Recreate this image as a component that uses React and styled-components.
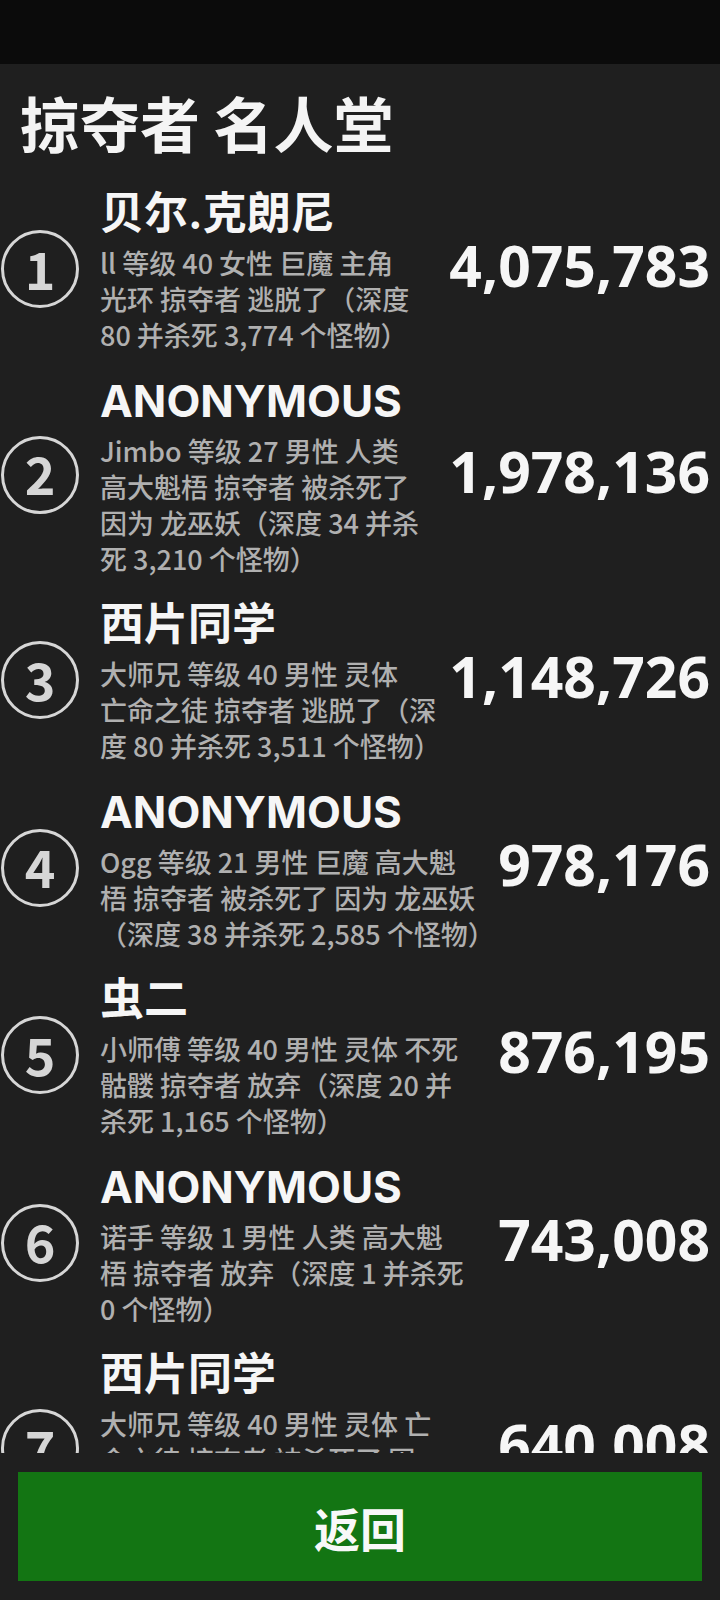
import styled, { createGlobalStyle } from "styled-components";

const GlobalStyle = createGlobalStyle`
  html, body {
    margin: 0;
    padding: 0;
    background: #1f1f1f;
  }
  body {
    font-family: "Noto Sans CJK SC", "Noto Sans", sans-serif;
  }
`;

const Page = styled.div`
  height: 100vh;
  display: flex;
  flex-direction: column;
  background: #1f1f1f;
  color: #f4f4f4;
  overflow: hidden;
`;

const StatusBar = styled.div`
  height: 64px;
  flex-shrink: 0;
  background: #0b0b0b;
`;

const Title = styled.h1`
  margin: 22px 0 0 0;
  padding-left: 20px;
  font-size: 60px;
  line-height: 72px;
  font-weight: 700;
  color: #f4f4f4;
  flex-shrink: 0;
`;

const List = styled.div`
  flex: 1;
  min-height: 0;
  overflow: hidden;
  padding-top: 27px;
  display: flex;
  flex-direction: column;
  gap: 19.5px;
`;

const Row = styled.div`
  display: flex;
  align-items: center;
  padding: 0 10px 0 1px;
`;

const Rank = styled.div`
  width: 78px;
  height: 78px;
  box-sizing: border-box;
  flex-shrink: 0;
  border: 3px solid #d6d6d6;
  border-radius: 50%;
  display: flex;
  align-items: center;
  justify-content: center;
  padding-bottom: 3px;
  font-size: 52px;
  font-weight: 700;
  color: #d6d6d6;
  line-height: 1;
`;

const Info = styled.div`
  flex: 1;
  min-width: 0;
  margin-left: 21px;
`;

const Name = styled.div`
  font-family: "Inter", "Noto Sans CJK SC", sans-serif;
  font-size: 44px;
  line-height: 56px;
  font-weight: 700;
  color: #f6f6f6;
  white-space: nowrap;
`;

const Desc = styled.div`
  margin-top: 4px;
  font-size: 27px;
  line-height: 36px;
  font-weight: 500;
  color: #b0b0b0;
  white-space: nowrap;
`;

const Score = styled.div`
  flex-shrink: 0;
  padding-bottom: 8px;
  font-family: "Noto Sans", "Noto Sans CJK SC", sans-serif;
  font-size: 57px;
  line-height: 72px;
  font-weight: 700;
  color: #f6f6f6;
  text-align: right;
`;

const Footer = styled.div`
  flex-shrink: 0;
  padding: 19px 18px;
`;

const BackButton = styled.button`
  width: 100%;
  height: 109px;
  border: none;
  background: #137513;
  color: #f8f8f8;
  font-family: "Noto Sans CJK SC", sans-serif;
  font-size: 46px;
  font-weight: 700;
  cursor: pointer;
`;

const entries = [
  {
    name: "贝尔.克朗尼",
    lines: ["ll 等级 40 女性 巨魔 主角", "光环 掠夺者 逃脱了（深度", "80 并杀死 3,774 个怪物）"],
    score: "4,075,783",
  },
  {
    name: "ANONYMOUS",
    lines: ["Jimbo 等级 27 男性 人类", "高大魁梧 掠夺者 被杀死了", "因为 龙巫妖（深度 34 并杀", "死 3,210 个怪物）"],
    score: "1,978,136",
  },
  {
    name: "西片同学",
    lines: ["大师兄 等级 40 男性 灵体", "亡命之徒 掠夺者 逃脱了（深", "度 80 并杀死 3,511 个怪物）"],
    score: "1,148,726",
  },
  {
    name: "ANONYMOUS",
    lines: ["Ogg 等级 21 男性 巨魔 高大魁", "梧 掠夺者 被杀死了 因为 龙巫妖", "（深度 38 并杀死 2,585 个怪物）"],
    score: "978,176",
  },
  {
    name: "虫二",
    lines: ["小师傅 等级 40 男性 灵体 不死", "骷髅 掠夺者 放弃（深度 20 并", "杀死 1,165 个怪物）"],
    score: "876,195",
  },
  {
    name: "ANONYMOUS",
    lines: ["诺手 等级 1 男性 人类 高大魁", "梧 掠夺者 放弃（深度 1 并杀死", "0 个怪物）"],
    score: "743,008",
  },
  {
    name: "西片同学",
    lines: ["大师兄 等级 40 男性 灵体 亡", "命之徒 掠夺者 被杀死了 因", "为 龙巫妖（深度 52 并杀死", "2,406 个怪物）"],
    score: "640,008",
  },
];

const App = () => {
  return (
    <Page>
      <GlobalStyle />
      <StatusBar />
      <Title>掠夺者 名人堂</Title>
      <List>
        {entries.map((entry, i) => (
          <Row key={i}>
            <Rank>{i + 1}</Rank>
            <Info>
              <Name>{entry.name}</Name>
              <Desc>
                {entry.lines.map((line, j) => (
                  <div key={j}>{line}</div>
                ))}
              </Desc>
            </Info>
            <Score>{entry.score}</Score>
          </Row>
        ))}
      </List>
      <Footer>
        <BackButton>返回</BackButton>
      </Footer>
    </Page>
  );
};

export default App;
